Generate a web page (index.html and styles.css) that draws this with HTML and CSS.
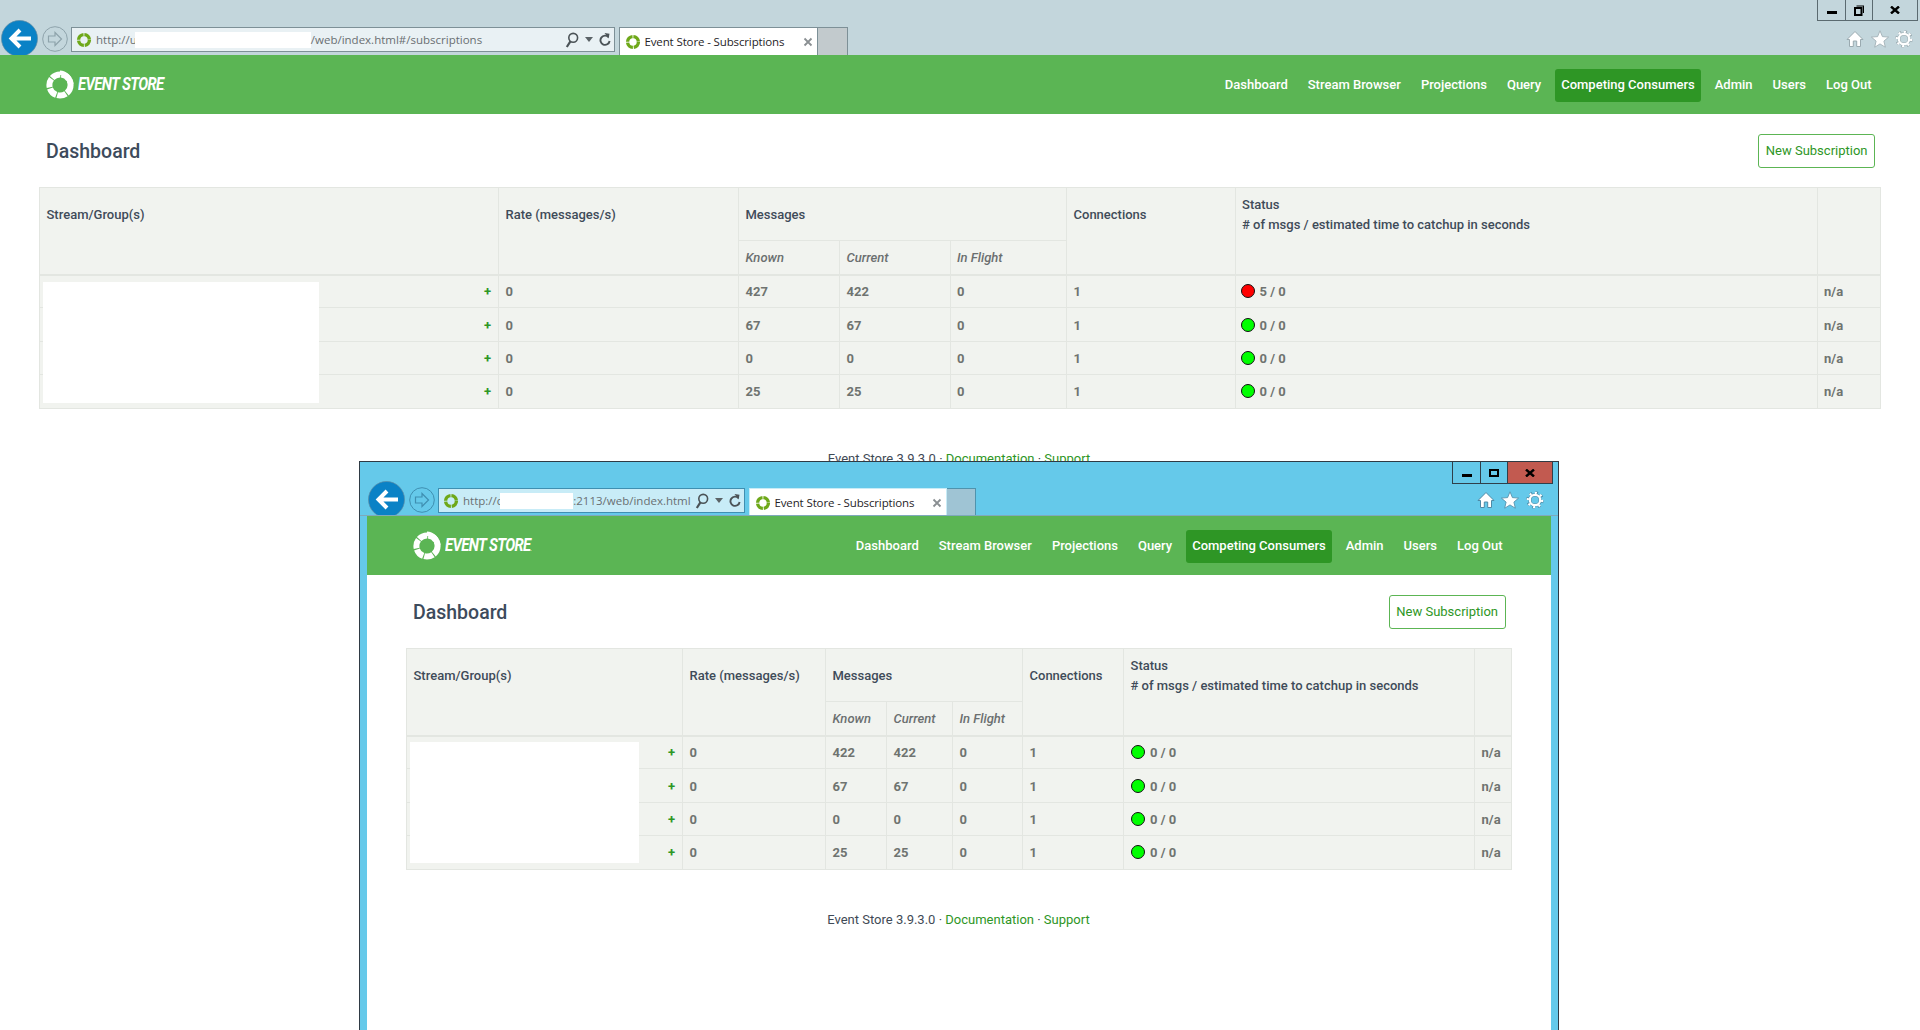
FILE: index.html
```html
<!DOCTYPE html>
<html lang="en">
<head>
<meta charset="utf-8">
<title>Event Store - Subscriptions</title>
<link rel="stylesheet" href="styles.css">
</head>
<body>
<svg class="defs" aria-hidden="true">
  <symbol id="i-back" viewBox="0 0 37 37"><circle cx="18.5" cy="18.5" r="18" fill="#0a82c6" stroke="#5d8ba3" stroke-width=".7"/><path d="M19 10 10.5 18.5 19 27M11 18.5H30" fill="none" stroke="#fff" stroke-width="4"/></symbol>
  <symbol id="i-forward" viewBox="0 0 26 26"><circle cx="13" cy="13" r="12.3" fill="none" stroke="currentColor" stroke-width="1"/><path d="M13 6.5 19.5 13 13 19.5V16H6.5V10H13Z" fill="none" stroke="currentColor" stroke-width="1.2"/></symbol>
  <symbol id="i-fav" viewBox="0 0 16 16"><circle cx="8" cy="8" r="5.4" fill="none" stroke="#6ea819" stroke-width="3.4" stroke-dasharray="7.5 .9"/></symbol>
  <symbol id="i-search" viewBox="0 0 14 16"><circle cx="8.2" cy="5.8" r="4.4" fill="none" stroke="#4b5357" stroke-width="1.6"/><path d="M5.4 9.4 1.8 15" stroke="#4b5357" stroke-width="2.2"/></symbol>
  <symbol id="i-caret" viewBox="0 0 8 5"><path d="M0 0H8L4 5Z" fill="#5b6367"/></symbol>
  <symbol id="i-refresh" viewBox="0 0 12 16"><path d="M9.5 5.2A4.6 4.6 0 1 0 10.6 9" fill="none" stroke="#4b5357" stroke-width="1.9"/><path d="M5.5 1 10.5 1.8 9.6 6.6Z" fill="#4b5357"/></symbol>
  <symbol id="i-close" viewBox="0 0 10 10"><path d="M1.5 1.5 8.5 8.5M8.5 1.5 1.5 8.5" stroke="#8a8f92" stroke-width="1.8"/></symbol>
  <symbol id="i-home" viewBox="0 0 18 18"><path d="M9 1.5 17 9.5H14.5V16.5H10.7V11H7.3V16.5H3.5V9.5H1Z" fill="#fff" stroke="var(--icon-edge)" stroke-width="1"/></symbol>
  <symbol id="i-star" viewBox="0 0 18 18"><path d="M9 .8 11.4 6.6 17.6 7.1 12.9 11.1 14.3 17.2 9 13.9 3.7 17.2 5.1 11.1.4 7.1 6.6 6.6Z" fill="#fff" stroke="var(--icon-edge)" stroke-width=".8"/></symbol>
  <symbol id="i-gear" viewBox="0 0 18 18"><circle cx="9" cy="9" r="7" fill="none" stroke="var(--icon-edge)" stroke-width="3.4" stroke-dasharray="2.6 2.9"/><circle cx="9" cy="9" r="5.2" fill="none" stroke="var(--icon-edge)" stroke-width="3.2"/><circle cx="9" cy="9" r="5.2" fill="none" stroke="#fff" stroke-width="2.2"/><circle cx="9" cy="9" r="7.2" fill="none" stroke="#fff" stroke-width="2.2" stroke-dasharray="2 3.6"/></symbol>
  <symbol id="i-min" viewBox="0 0 10 3"><path d="M0 0H10V3H0Z" fill="#000"/></symbol>
  <symbol id="i-restore" viewBox="0 0 10 11"><path d="M2.5 1H9.5V8" fill="none" stroke="#000" stroke-width="1.2"/><path d="M1 3H7.5V10H1Z" fill="none" stroke="#000" stroke-width="2"/></symbol>
  <symbol id="i-max" viewBox="0 0 10 8"><path d="M1 1H9V7H1Z" fill="none" stroke="#000" stroke-width="2"/></symbol>
  <symbol id="i-x" viewBox="0 0 10 8"><path d="M1 .5 9 7.5M9 .5 1 7.5" stroke="#000" stroke-width="2.4"/></symbol>
  <symbol id="i-ring" viewBox="0 0 28 30"><circle cx="14" cy="15" r="10.6" fill="none" stroke="#fff" stroke-width="6" stroke-dasharray="9.2 1"/><path d="M14 .5C20 .5 27 6 27.5 14L22 14C21.5 10 18 5.5 14 5Z" fill="#fff"/></symbol>
</svg>

<div class="win win-outer">
  <div class="chrome">
    <div class="toolbar">
      <svg class="back"><use href="#i-back"/></svg>
      <svg class="forward"><use href="#i-forward"/></svg>
      <div class="address">
        <svg class="fav"><use href="#i-fav"/></svg>
        <div class="url"><span>http://u</span><span class="mask"></span><span>/web/index.html#/subscriptions</span></div>
        <svg class="ic-search"><use href="#i-search"/></svg>
        <svg class="ic-caret"><use href="#i-caret"/></svg>
        <svg class="ic-refresh"><use href="#i-refresh"/></svg>
      </div>
      <div class="tab">
        <svg class="fav"><use href="#i-fav"/></svg>
        <span class="tab-title">Event Store - Subscriptions</span>
        <svg class="tab-close"><use href="#i-close"/></svg>
      </div>
      <div class="tab-new"></div>
      <div class="tools">
        <svg class="tool"><use href="#i-home"/></svg>
        <svg class="tool"><use href="#i-star"/></svg>
        <svg class="tool"><use href="#i-gear"/></svg>
      </div>
    </div>
    <div class="controls">
      <div class="ctl ctl-min"><svg class="g-min"><use href="#i-min"/></svg></div>
      <div class="ctl ctl-max"><svg class="g-max"><use href="#i-restore"/></svg></div>
      <div class="ctl ctl-close"><svg class="g-x"><use href="#i-x"/></svg></div>
    </div>
  </div>
  <div class="page">
    <nav class="nav">
      <a class="brand"><svg class="ring"><use href="#i-ring"/></svg><span class="wordmark">EVENT STORE<small>.</small></span></a>
      <ul class="menu">
        <li>Dashboard</li><li>Stream Browser</li><li>Projections</li><li>Query</li><li class="active">Competing Consumers</li><li>Admin</li><li>Users</li><li>Log Out</li>
      </ul>
    </nav>
    <main class="main">
      <div class="head"><h1>Dashboard</h1><a class="btn">New Subscription</a></div>
      <div class="table-wrap">
        <table class="grid">
          <colgroup><col class="c1"><col class="c2"><col class="c3"><col class="c4"><col class="c5"><col class="c6"><col class="c7"><col class="c8"></colgroup>
          <thead>
            <tr class="r-top"><th rowspan="2">Stream/Group(s)</th><th rowspan="2">Rate (messages/s)</th><th colspan="3">Messages</th><th rowspan="2">Connections</th><th rowspan="2" class="status-head">Status<br># of msgs / estimated time to catchup in seconds</th><th rowspan="2"></th></tr>
            <tr class="r-sub"><th>Known</th><th>Current</th><th>In Flight</th></tr>
          </thead>
          <tbody>
            <tr><td class="plus">+</td><td>0</td><td>427</td><td>422</td><td>0</td><td>1</td><td class="state"><span class="dot red"></span>5 / 0</td><td>n/a</td></tr>
            <tr><td class="plus">+</td><td>0</td><td>67</td><td>67</td><td>0</td><td>1</td><td class="state"><span class="dot green"></span>0 / 0</td><td>n/a</td></tr>
            <tr><td class="plus">+</td><td>0</td><td>0</td><td>0</td><td>0</td><td>1</td><td class="state"><span class="dot green"></span>0 / 0</td><td>n/a</td></tr>
            <tr><td class="plus">+</td><td>0</td><td>25</td><td>25</td><td>0</td><td>1</td><td class="state"><span class="dot green"></span>0 / 0</td><td>n/a</td></tr>
          </tbody>
        </table>
        <div class="redact"></div>
      </div>
      <p class="foot">Event Store 3.9.3.0 · <a>Documentation</a> · <a>Support</a></p>
    </main>
  </div>
</div>

<div class="win win-inner">
  <div class="chrome">
    <div class="toolbar">
      <svg class="back"><use href="#i-back"/></svg>
      <svg class="forward"><use href="#i-forward"/></svg>
      <div class="address">
        <svg class="fav"><use href="#i-fav"/></svg>
        <div class="url"><span>http://c</span><span class="mask"></span><span>:2113/web/index.html</span></div>
        <svg class="ic-search"><use href="#i-search"/></svg>
        <svg class="ic-caret"><use href="#i-caret"/></svg>
        <svg class="ic-refresh"><use href="#i-refresh"/></svg>
      </div>
      <div class="tab">
        <svg class="fav"><use href="#i-fav"/></svg>
        <span class="tab-title">Event Store - Subscriptions</span>
        <svg class="tab-close"><use href="#i-close"/></svg>
      </div>
      <div class="tab-new"></div>
      <div class="tools">
        <svg class="tool"><use href="#i-home"/></svg>
        <svg class="tool"><use href="#i-star"/></svg>
        <svg class="tool"><use href="#i-gear"/></svg>
      </div>
    </div>
    <div class="controls">
      <div class="ctl ctl-min"><svg class="g-min"><use href="#i-min"/></svg></div>
      <div class="ctl ctl-max"><svg class="g-maxi"><use href="#i-max"/></svg></div>
      <div class="ctl ctl-close"><svg class="g-x"><use href="#i-x"/></svg></div>
    </div>
  </div>
  <div class="page">
    <nav class="nav">
      <a class="brand"><svg class="ring"><use href="#i-ring"/></svg><span class="wordmark">EVENT STORE<small>.</small></span></a>
      <ul class="menu">
        <li>Dashboard</li><li>Stream Browser</li><li>Projections</li><li>Query</li><li class="active">Competing Consumers</li><li>Admin</li><li>Users</li><li>Log Out</li>
      </ul>
    </nav>
    <main class="main">
      <div class="head"><h1>Dashboard</h1><a class="btn">New Subscription</a></div>
      <div class="table-wrap">
        <table class="grid">
          <colgroup><col class="c1"><col class="c2"><col class="c3"><col class="c4"><col class="c5"><col class="c6"><col class="c7"><col class="c8"></colgroup>
          <thead>
            <tr class="r-top"><th rowspan="2">Stream/Group(s)</th><th rowspan="2">Rate (messages/s)</th><th colspan="3">Messages</th><th rowspan="2">Connections</th><th rowspan="2" class="status-head">Status<br># of msgs / estimated time to catchup in seconds</th><th rowspan="2"></th></tr>
            <tr class="r-sub"><th>Known</th><th>Current</th><th>In Flight</th></tr>
          </thead>
          <tbody>
            <tr><td class="plus">+</td><td>0</td><td>422</td><td>422</td><td>0</td><td>1</td><td class="state"><span class="dot green"></span>0 / 0</td><td>n/a</td></tr>
            <tr><td class="plus">+</td><td>0</td><td>67</td><td>67</td><td>0</td><td>1</td><td class="state"><span class="dot green"></span>0 / 0</td><td>n/a</td></tr>
            <tr><td class="plus">+</td><td>0</td><td>0</td><td>0</td><td>0</td><td>1</td><td class="state"><span class="dot green"></span>0 / 0</td><td>n/a</td></tr>
            <tr><td class="plus">+</td><td>0</td><td>25</td><td>25</td><td>0</td><td>1</td><td class="state"><span class="dot green"></span>0 / 0</td><td>n/a</td></tr>
          </tbody>
        </table>
        <div class="redact"></div>
      </div>
      <p class="foot">Event Store 3.9.3.0 · <a>Documentation</a> · <a>Support</a></p>
    </main>
  </div>
</div>
</body>
</html>
```
FILE: styles.css
```css
* { box-sizing: border-box; }
html, body { margin: 0; height: 1030px; overflow: hidden; background: #fff; }
body { position: relative; font: 13px/20px Roboto, "Liberation Sans", sans-serif; color: #3f4a56; }
.defs { position: absolute; width: 0; height: 0; }
svg { display: block; flex: none; }

/* Windows */
.win-outer { --chrome: #c3d6dc; --icon-edge: #9aaab0; --ctl-line: #5b6a70; height: 1030px; overflow: hidden; }
.win-inner { --chrome: #65c9ea; --icon-edge: #4d8aa6; --ctl-line: #2f3f4a; position: absolute; left: 359px; top: 461px; width: 1200px; height: 569px; background: #65c9ea; border: solid #2f3a44; border-width: 1.5px 1px 0; overflow: hidden; }

/* Browser chrome */
.chrome { position: relative; background: var(--chrome); overflow: hidden; }
.win-outer .chrome { height: 55px; }
.win-inner .chrome { height: 54px; border-bottom: 1px solid #7fa9bb; }
.toolbar { display: flex; align-items: flex-start; }
.win-outer .toolbar { padding: 20px 7px 0 1px; }
.win-inner .toolbar { padding: 19px 14.5px 0 8px; }
.back { width: 37px; height: 37px; }
.forward { width: 26px; height: 26px; margin: 6px 0 0 4px; color: #8ea3ab; }
.win-inner .forward { color: #3f8fb1; }
.address { display: flex; align-items: center; height: 24.5px; margin: 7px 0 0 3px; background: #e9f1f4; border: 1.5px solid #7d9097; padding: 1px 3.5px 0 4px; font: 11.5px/16px "Open Sans", "Noto Sans", sans-serif; color: #6a6f72; }
.win-outer .address { width: 544px; }
.win-inner .address { width: 307px; background: #c8ecf7; border-color: #3f8fb1; }
.fav { width: 16px; height: 16px; }
.url { display: flex; flex: 1; min-width: 0; overflow: hidden; white-space: nowrap; margin-left: 4px; }
.mask { flex: none; height: 16px; margin-left: -2px; background: #fff; }
.win-outer .mask { width: 176px; }
.win-inner .mask { width: 73px; }
.ic-search { width: 14px; height: 16px; margin-left: 1px; }
.ic-caret { width: 8px; height: 5px; margin-left: 6px; }
.ic-refresh { width: 12px; height: 16px; margin-left: 6px; }
.tab { display: flex; align-items: center; height: 28px; width: 199px; margin: 7px 0 0 3.5px; padding: 0 4px 0 5px; background: #fff; font: 11.5px/16px "Open Sans", "Noto Sans", sans-serif; color: #1f2427; white-space: nowrap; }
.win-outer .tab { border: 1px solid #7d9097; border-bottom: 0; }
.win-inner .tab { width: 198px; border: 1px solid #c8ecf7; border-bottom: 0; }
.tab-title { margin-left: 4px; flex: 1; letter-spacing: -.13px; }
.tab-close { width: 10px; height: 10px; }
.tab-new { width: 30px; height: 28px; margin-top: 7px; background: #c2cacd; border: 1px solid #7d9097; border-width: 1px 1px 0 0; }
.win-inner .tab-new { width: 29px; background: #9fc4d4; border-color: #4f93ad; }
.tools { display: flex; gap: 6.5px; margin: 10px 0 0 auto; }
.tool { width: 18px; height: 18px; }

/* Window controls */
.controls { position: absolute; top: 0; display: flex; height: 21px; border: 1px solid var(--ctl-line); border-top: 0; }
.win-outer .controls { right: 2px; }
.win-inner .controls { right: 5px; height: 22px; }
.ctl { display: flex; align-items: center; justify-content: center; height: 100%; }
.ctl-min { width: 28px; border-right: 1px solid var(--ctl-line); }
.ctl-max { width: 26px; }
.ctl-close { width: 45px; border-left: 1px solid var(--ctl-line); }
.win-inner .ctl-close { background: #c25a50; }
.g-min { width: 10px; height: 3px; margin-top: 5px; }
.g-max { width: 10px; height: 11px; }
.g-maxi { width: 10px; height: 8px; }
.g-x { width: 10px; height: 8px; }

/* Page */
.win-inner .page { margin: 0 7px; background: #fff; height: 520px; }
.nav { display: flex; align-items: center; justify-content: space-between; height: 59px; padding: 1px 42px 0 46px; background: #5bb554; }
.brand { display: flex; align-items: center; gap: 4px; color: #fff; }
.ring { width: 28px; height: 30px; }
.wordmark { display: inline-block; width: 88px; margin-top: 2px; font: italic 700 19px/30px Roboto, sans-serif; letter-spacing: -.8px; white-space: nowrap; transform: scaleX(.78); transform-origin: left center; }
.wordmark small { font-size: 8px; font-weight: 400; }
.menu { display: flex; align-items: center; gap: 7px; margin: 0; padding: 0; list-style: none; color: #fff; font-weight: 500; }
.menu li { height: 33px; padding: 6px 6.5px; border-radius: 3px; white-space: nowrap; }
.menu .active { background: #2e9625; }

.main { padding: 20px 41px 0 39px; }
.win-inner .main { padding-right: 40px; }
.head { display: flex; align-items: center; justify-content: space-between; height: 34px; margin-bottom: 19px; padding: 0 4px 0 7px; }
.win-inner .head { padding-right: 5.5px; }
h1 { margin: 2px 0 0; font: 500 19.5px/24px Roboto, sans-serif; color: #3d4b5c; }
.btn { height: 34.5px; padding: 6px 6.5px; border: 1px solid #5cb554; border-radius: 3px; color: #2e9625; white-space: nowrap; }

/* Table */
.table-wrap { position: relative; }
.grid { width: 100%; table-layout: fixed; border-collapse: collapse; background: #f1f3ef; }
.grid th, .grid td { padding: 0 6.5px; border: 1px solid #e3e6e1; text-align: left; vertical-align: middle; }
.grid td { padding-top: 2px; }
.grid th { font-weight: 500; color: #3f4b59; vertical-align: top; }
.r-top { height: 53px; }
.r-top th { padding-top: 17px; }
.r-top .status-head { padding-top: 7px; }
.r-sub { height: 34px; }
.r-sub th { font-style: italic; color: #6b6f6f; padding-top: 7px; }
.grid thead { border-bottom: 2px solid #e3e6e1; }
.grid tbody tr { height: 33.4px; }
.grid td { font-weight: 700; color: #6f7370; }
.grid .plus { padding-right: 7px; text-align: right; color: #2e9625; }
.grid .state { padding-left: 5px; }
.win-inner .grid .state { padding-left: 7px; }
.dot { display: inline-block; width: 14px; height: 14px; margin-right: 5px; border: 1px solid #111; border-radius: 50%; vertical-align: -2px; }
.red { background: #f00; }
.green { background: #0f0; }
.redact { position: absolute; background: #fff; height: 121px; }
.win-outer .redact { left: 4px; top: 95px; width: 276px; }
.win-inner .redact { left: 4px; top: 94px; width: 229px; }

.win-outer .c1 { width: 459px; } .win-outer .c2 { width: 240px; } .win-outer .c3 { width: 101px; } .win-outer .c4 { width: 110.5px; }
.win-outer .c5 { width: 116.5px; } .win-outer .c6 { width: 168.5px; } .win-outer .c7 { width: 582px; } .win-outer .c8 { width: 63px; }
.win-inner .c1 { width: 276px; } .win-inner .c2 { width: 143px; } .win-inner .c3 { width: 61px; } .win-inner .c4 { width: 66px; }
.win-inner .c5 { width: 70px; } .win-inner .c6 { width: 101px; } .win-inner .c7 { width: 351px; } .win-inner .c8 { width: 37px; }

.foot { margin: 40px 0 0; text-align: center; color: #3f4a56; }
.foot a { color: #2e9625; }
```
